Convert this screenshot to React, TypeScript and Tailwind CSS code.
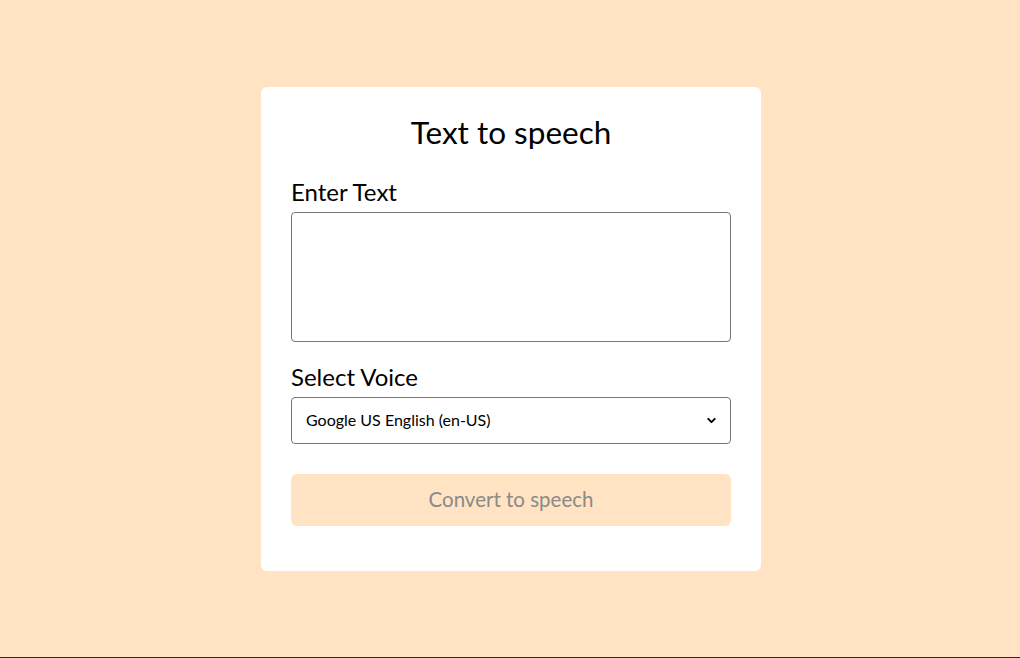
import { ChevronDown } from "lucide-react";

export default function App() {
  return (
    <div
      className="flex h-[658px] items-center justify-center border-b border-[#2b2b2b] bg-[#ffe3c3]"
      style={{ fontFamily: "Lato, 'Noto Sans', sans-serif" }}
    >
      <div className="ml-[2px] flex w-[500px] flex-col rounded-md bg-white px-[30px] pb-[45px] pt-[27px]">
        <h1 className="text-center text-[31.5px] leading-[36px] text-black">Text to speech</h1>
        <label className="mt-[28px] text-[24px] leading-[28px] text-black">Enter Text</label>
        <textarea className="mt-[6px] h-[130px] resize-none rounded border border-[#767676] bg-white" />
        <label className="mt-[21px] text-[24px] leading-[28px] text-black">Select Voice</label>
        <div className="mt-[6px] flex h-[47px] items-center justify-between rounded border border-[#767676] pl-[14px] pr-[12px]">
          <span className="text-[16px] text-black">Google US English (en-US)</span>
          <ChevronDown className="size-[13px] text-black" strokeWidth={3.5} />
        </div>
        <button className="mt-[30px] h-[52px] rounded-md bg-[#ffe3c3] text-[20.5px] text-[#8a8a8a]">
          Convert to speech
        </button>
      </div>
    </div>
  );
}
